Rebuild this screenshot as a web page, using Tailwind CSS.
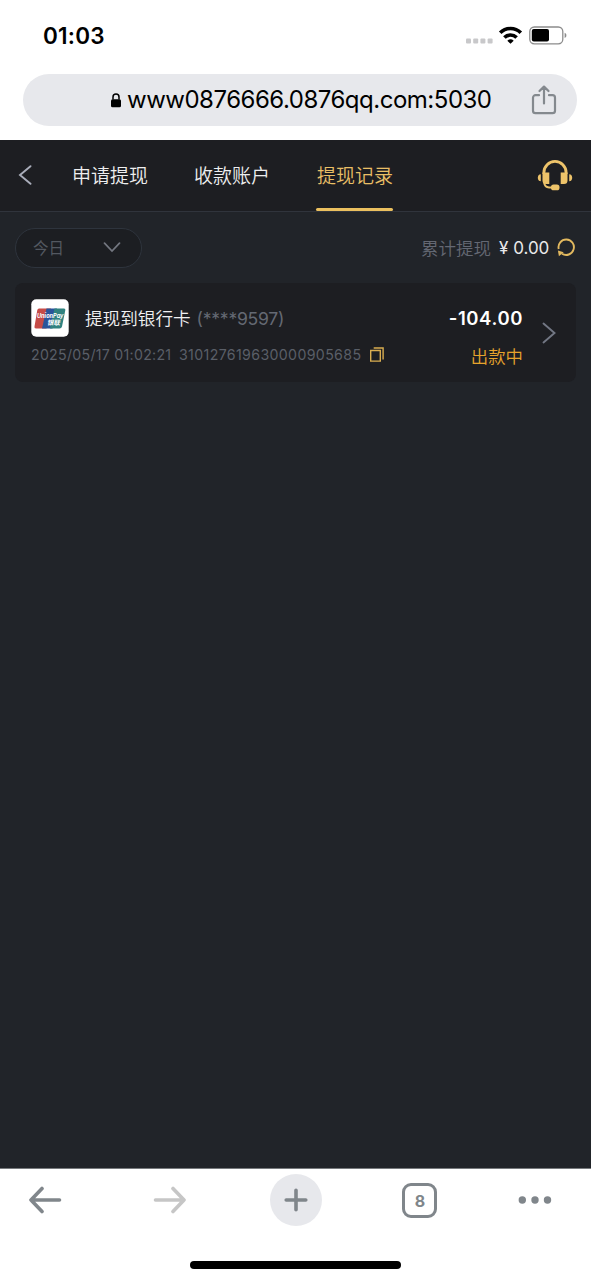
<!DOCTYPE html>
<html lang="zh-CN">
<head>
<meta charset="utf-8">
<meta name="viewport" content="width=device-width, initial-scale=1">
<title>提现记录</title>
<script src="https://cdn.jsdelivr.net/npm/@tailwindcss/browser@4"></script>
</head>
<body class="flex h-[1280px] w-[591px] flex-col overflow-hidden bg-white font-['Inter','Noto_Sans_CJK_SC',sans-serif]">
  <!-- Status bar -->
  <div class="flex h-[74px] shrink-0 items-start pl-[43px] pr-6">
    <div class="mt-5 text-[22.5px] leading-8 font-semibold tracking-[0.2px] text-black">01:03</div>
    <svg class="mt-[22px] ml-auto h-7 w-[104px]" viewBox="0 0 104 28">
      <g fill="#c8c8ca"><rect x="3" y="16.5" width="5" height="5" rx="1"/><rect x="10.2" y="16.5" width="5" height="5" rx="1"/><rect x="17.4" y="16.5" width="5" height="5" rx="1"/><rect x="24.6" y="16.5" width="5" height="5" rx="1"/></g>
      <g fill="none" stroke="#000" stroke-width="3.6"><path d="M37.2 10.800a14.500 14.500 0 0 1 20.600 0"/><path d="M41.400 15.600a8.600 8.600 0 0 1 12.200 0"/></g>
      <path d="M44.300 18.700a4.800 4.800 0 0 1 6.400 0l-3.200 3.100z"/>
      <rect x="66.800" y="5" width="33" height="16.800" rx="4.500" fill="none" stroke="#8c8c8c" stroke-width="1.300"/>
      <rect x="68.800" y="7" width="17.200" height="12.600" rx="2"/>
      <path d="M101.600 10.800c2.400.8 2.400 4.400 0 5.200z" fill="#8c8c8c"/>
    </svg>
  </div>

  <!-- Address bar -->
  <div class="mr-[14px] mb-[14px] ml-[23px] flex h-[52px] shrink-0 items-center rounded-full bg-[#e7e8ec]">
    <svg class="ml-[87px] h-[15px] w-3" viewBox="0 0 12 15"><rect x="1" y="6.200" width="10" height="8" rx="1.500"/><path d="M3 6.500V4a3 3 0 0 1 6 0v2.500" fill="none" stroke="#000" stroke-width="1.500"/></svg>
    <div class="ml-[5px] w-[365px] text-[24px] leading-8 tracking-[-0.49px] whitespace-nowrap text-black">www0876666.0876qq.com:5030</div>
    <svg class="mr-[20px] ml-auto h-[30px] w-[26px]" viewBox="0 0 26 30" fill="none" stroke="#84898e" stroke-width="2.200" stroke-linecap="round" stroke-linejoin="round"><path d="M8 10.200H4.500a2.500 2.500 0 0 0-2.500 2.500v13a2.500 2.500 0 0 0 2.500 2.500h17a2.500 2.500 0 0 0 2.500-2.500v-13a2.500 2.500 0 0 0-2.500-2.500H18M13 18.500V2M8.500 6 13 1.600 17.500 6"/></svg>
  </div>

  <!-- Application -->
  <main class="flex min-h-0 flex-1 flex-col bg-[#212429]">
    <header class="flex h-[72px] shrink-0 border-b border-[#30343c] bg-[#1d1e22]">
      <svg class="mt-[25px] ml-[18px] h-5 w-[14px]" viewBox="0 0 14 20" fill="none" stroke="#a9adba" stroke-width="1.900" stroke-linecap="round"><path d="M12.500 1.200 2 10l10.500 8.800"/></svg>
      <nav class="ml-[40px] flex gap-[46px] text-[19px] leading-[74px] font-[350] text-[#eeeeef]">
        <span class="h-[71px] w-[76px] whitespace-nowrap">申请提现</span>
        <span class="h-[71px] w-[76px] whitespace-nowrap">收款账户</span>
        <span class="flex h-[71px] w-[77px] flex-col justify-between whitespace-nowrap text-[#e9bf66]"><span class="h-[67px] pl-px">提现记录</span><i class="h-[3px] rounded-full bg-[#ebc05f]"></i></span>
      </nav>
      <svg class="mt-[19px] mr-[18px] ml-auto h-[33px] w-9" viewBox="0 0 36 33" fill="none">
        <g fill="#edc36a"><path d="M3.800 15.200v7C-.200 22.200-.200 15.200 3.800 15.200zM32.200 15.200v7c4 0 4-7 0-7z"/><path d="M5.500 13.500h6.800V25H9a3.500 3.500 0 0 1-3.500-3.500zM23.700 13.500h6.800v8a3.500 3.500 0 0 1-3.500 3.500h-3.300z"/><rect x="14" y="25.500" width="8.500" height="5.800" rx="2.600"/></g>
        <path d="M6.900 15v-1.500a11.100 11.100 0 0 1 22.200 0V15" stroke="#edc36a" stroke-width="2.900"/>
        <path d="M7.300 23v1.200Q7.800 28.400 12 28.400h4" stroke="#edc36a" stroke-width="2"/>
      </svg>
    </header>

    <section class="flex h-[71px] shrink-0 items-center px-[15px]">
      <button class="flex h-10 w-[127px] items-center justify-between rounded-full border border-[#2e343d] bg-[#1c1e22] pr-5 pl-[17px] text-[15.500px] text-[#535860]"><span class="pt-[2px]">今日</span>
        <svg class="h-[11px] w-[18px]" viewBox="0 0 18 11" fill="none" stroke="#737780" stroke-width="1.700" stroke-linecap="round"><path d="M1.500 1.200 9 9l7.500-7.800"/></svg>
      </button>
      <div class="ml-auto flex items-center whitespace-nowrap">
        <span class="pt-[3px] text-[17.5px] font-[350] text-[#646873]">累计提现</span>
        <span class="ml-2 w-[50px] pt-[3px] text-[17px] text-[#e9e9ea]">¥ 0.00</span>
        <svg class="ml-[7px] h-5 w-5" viewBox="0 0 20 20" fill="none"><path d="M2.700 11A7.700 7.700 0 1 1 6 15.700" stroke="#e2b95f" stroke-width="1.900"/><path d="m1.900 12.500 5.800 1.800-4.800 3.900z" fill="#e2b95f"/></svg>
      </div>
    </section>

    <article class="mx-[15px] flex h-[99px] shrink-0 rounded-lg bg-[#1d1e22] pl-4">
      <div class="w-[354px] pt-4">
        <div class="flex h-[38px] items-center">
          <svg class="h-[38px] w-[38px]" viewBox="0 0 38 38">
            <rect x=".3" y=".3" width="37.400" height="37.400" rx="5" fill="#fff"/>
            <path d="M8 9.500h12l-4.500 20H5q-2 0-1.500-2L6.300 11q.4-1.500 1.700-1.500z" fill="#c64b47"/>
            <path d="M15.500 9.500H26l-4.500 20H11z" fill="#29549a"/>
            <path d="M23.500 9.500H33q1.700 0 1.300 1.800L31 27.500q-.5 2-2.500 2H19z" fill="#30827f"/>
            <text x="6" y="18.800" font-family="Inter" font-size="6.400" font-weight="700" font-style="italic" fill="#fff" textLength="26.500" lengthAdjust="spacingAndGlyphs">UnionPay</text>
            <text x="16.500" y="25.600" font-family="Noto Sans CJK SC" font-size="6.600" font-weight="700" fill="#fff" textLength="13" lengthAdjust="spacingAndGlyphs" transform="skewX(-12) translate(5 0)">银联</text>
          </svg>
          <div class="ml-4 pt-[2px] text-[17.6px] font-[350] whitespace-nowrap text-[#f1f1f2]">提现到银行卡 <span class="ml-px font-normal tracking-[-0.250px] text-[#646973]">(****9597)</span></div>
        </div>
        <div class="mt-[6px] flex h-6 items-center text-[14.200px] whitespace-nowrap text-[#5a5f68]">
          <span class="w-[148px] tracking-[0.260px]">2025/05/17 01:02:21</span>
          <span class="w-[183px] tracking-[0.350px]">310127619630000905685</span>
          <svg class="mb-px ml-2 h-[15px] w-[14px] shrink-0" viewBox="0 0 14 15" fill="none" stroke="#d9ad50" stroke-width="1.400"><path d="M.7 3.500h9.600v10.600H.7zM3.700 1h9.400v11.500"/></svg>
        </div>
      </div>
      <div class="flex w-[138px] flex-col items-end pt-[21px] whitespace-nowrap">
        <div class="text-[18.500px] leading-7 font-semibold tracking-[0.600px] text-white">-104.00</div>
        <div class="mt-[11px] text-[17.400px] leading-7 font-[350] text-[#e6a32c]">出款中</div>
      </div>
      <svg class="mt-[39px] ml-[19px] h-[22px] w-[14px]" viewBox="0 0 14 22" fill="none" stroke="#727784" stroke-width="1.900" stroke-linecap="round"><path d="M1.500 1.500 12.500 11l-11 9.500"/></svg>
    </article>
  </main>

  <!-- Browser toolbar -->
  <footer class="flex h-[112px] shrink-0 flex-col items-center border-t border-[#777a7d] bg-white">
    <div class="mt-[5px] flex h-[52px] w-full items-center">
      <svg class="ml-7 h-7 w-[34px]" viewBox="0 0 34 28" fill="none" stroke="#80868b" stroke-width="3.600" stroke-linecap="round" stroke-linejoin="round"><path d="M31.500 14H3M14 2.500 3 14l11 11.500"/></svg>
      <svg class="ml-[91px] h-7 w-[34px]" viewBox="0 0 34 28" fill="none" stroke="#c6c6c6" stroke-width="3.600" stroke-linecap="round" stroke-linejoin="round"><path d="M2.500 14H31M20 2.500 31 14 20 25.500"/></svg>
      <div class="ml-[83px] flex h-[52px] w-[52px] items-center justify-center rounded-full bg-[#e7e8ec]">
        <svg class="h-6 w-6" viewBox="0 0 24 24" stroke="#80868b" stroke-width="3.600" stroke-linecap="round"><path d="M12 2.200v19.600M2.200 12h19.600"/></svg>
      </div>
      <div class="ml-[80px] flex h-[35px] w-[35px] items-center justify-center rounded-[9px] border-3 border-[#80868b] pt-[2px] pl-px text-[16px] font-bold text-[#80868b]">8</div>
      <svg class="ml-[81px] h-2 w-[34px]" viewBox="0 0 34 8" fill="#80868b"><circle cx="4.300" cy="4" r="3.700"/><circle cx="17" cy="4" r="3.700"/><circle cx="29.500" cy="4" r="3.700"/></svg>
    </div>
    <div class="mt-[35px] h-[8px] w-[211px] rounded-full bg-black"></div>
  </footer>
</body>
</html>
